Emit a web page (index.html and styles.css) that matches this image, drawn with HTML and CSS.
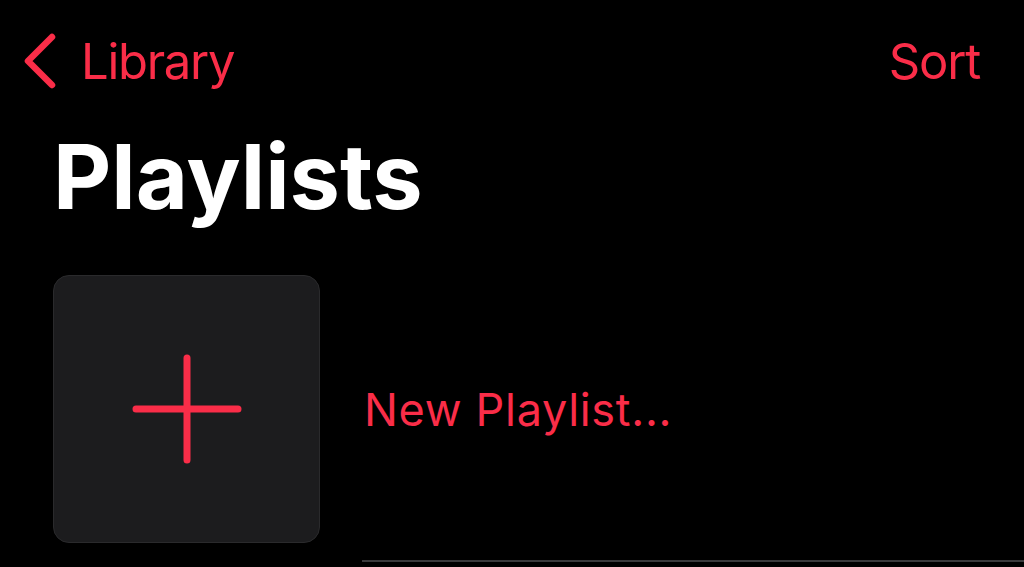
FILE: index.html
```html
<!DOCTYPE html>
<html lang="en">
<head>
<meta charset="UTF-8">
<meta name="viewport" content="width=device-width, initial-scale=1.0">
<title>Playlists</title>
<link rel="stylesheet" href="styles.css">
</head>
<body>
<div class="nav">
  <a class="back" href="#">
    <svg class="chevron" width="34" height="58" viewBox="0 0 34 58">
      <path d="M29 5 L5 29 L29 53" fill="none" stroke="#fa2d48" stroke-width="6.5" stroke-linecap="round" stroke-linejoin="round"/>
    </svg>
    <span>Library</span>
  </a>
  <a class="sort" href="#">Sort</a>
</div>

<h1 class="title">Playlists</h1>

<div class="row">
  <div class="tile">
    <svg width="110" height="110" viewBox="0 0 110 110">
      <path d="M55 4 V106 M4 55 H106" fill="none" stroke="#fa2d48" stroke-width="7" stroke-linecap="round"/>
    </svg>
  </div>
  <div class="row-label">New Playlist...</div>
</div>
<div class="separator"></div>
</body>
</html>
```

FILE: styles.css
```css
body {
  margin: 0;
  background-color: #000;
  font-family: Inter, "Noto Sans", sans-serif;
  color: #fff;
  overflow: hidden;
}
a {
  color: #fa2d48;
  text-decoration: none;
}
.nav {
  display: flex;
  justify-content: space-between;
  align-items: center;
  height: 122px;
  padding: 0 44px 0 23px;
}
.back {
  display: flex;
  align-items: center;
  gap: 24px;
  font-size: 49px;
  letter-spacing: -1.3px;
}
.sort {
  font-size: 49px;
  letter-spacing: -1.2px;
}
.title {
  margin: 0 0 0 53px;
  font-size: 90px;
  font-weight: 700;
  line-height: 110px;
}
.row {
  display: flex;
  align-items: center;
  margin-top: 43px;
  padding-left: 53px;
}
.tile {
  width: 267px;
  height: 268px;
  border-radius: 16px;
  background-color: #1c1c1e;
  border: 1px solid #2a2a2c;
  display: flex;
  align-items: center;
  justify-content: center;
  box-sizing: border-box;
}
.row-label {
  margin-left: 44px;
  font-size: 45px;
  letter-spacing: 0.7px;
  color: #fa2d48;
}
.separator {
  margin: 17px 0 0 362px;
  height: 2px;
  background-color: #3a3a3c;
}
```
